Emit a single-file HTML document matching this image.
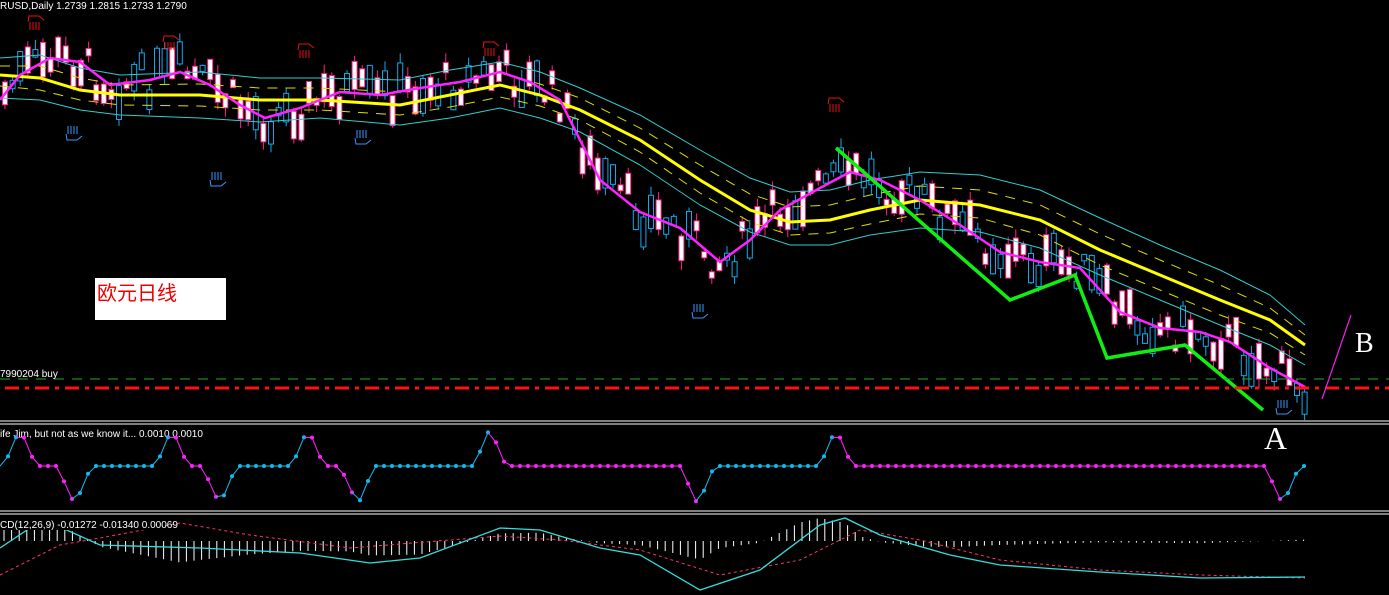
<!DOCTYPE html>
<html><head><meta charset="utf-8"><style>
html,body{margin:0;padding:0;background:#000;width:1389px;height:595px;overflow:hidden}
svg{display:block}
.t{font-family:"Liberation Sans",sans-serif;font-size:10px;fill:#fff}
</style></head><body>
<svg id="s" width="1389" height="595" xmlns="http://www.w3.org/2000/svg">
<g id="cand"></g>
<polyline fill="none" stroke="#3cc" stroke-width="1" points="0,58 40,55 80,68 120,75 200,72 260,78 320,78 400,80 450,70 500,62 540,72 580,88 640,115 700,150 750,178 790,192 830,190 870,180 920,172 980,175 1040,190 1100,218 1160,245 1220,270 1270,295 1305,325"/>
<polyline fill="none" stroke="#3cc" stroke-width="1" points="0,98 40,100 80,110 120,115 200,118 260,122 320,118 400,125 450,118 500,108 540,118 580,132 640,165 700,205 750,232 790,245 830,245 870,235 920,228 980,232 1040,248 1100,275 1160,300 1220,325 1270,345 1305,365"/>
<polyline fill="none" stroke="#dd0" stroke-width="1" stroke-dasharray="10,8" points="0,66 40,66 80,78 120,85 200,84 260,88 320,88 400,92 450,83 500,73 540,84 580,98 640,128 700,165 750,194 790,207 830,205 870,195 920,186 980,190 1040,205 1100,234 1160,260 1220,285 1270,308 1305,335"/>
<polyline fill="none" stroke="#dd0" stroke-width="1" stroke-dasharray="10,8" points="0,86 40,90 80,100 120,105 200,106 260,110 320,110 400,115 450,107 500,97 540,106 580,120 640,152 700,193 750,222 790,235 830,233 870,224 920,214 980,218 1040,235 1100,265 1160,290 1220,315 1270,333 1305,355"/>
<polyline fill="none" stroke="#ff0" stroke-width="3" points="0,75 40,78 80,90 120,95 200,95 260,100 320,100 400,105 450,95 500,85 540,95 580,110 640,140 700,180 750,210 790,222 830,220 870,210 920,200 980,205 1040,220 1100,250 1160,275 1220,300 1270,320 1305,345"/>
<polyline fill="none" stroke="#f2f" stroke-width="2.5" points="0,100 20,75 50,58 80,62 110,85 150,80 180,72 210,85 240,105 265,118 300,108 340,92 380,95 420,88 460,82 500,72 530,82 560,100 580,140 600,180 640,212 680,228 720,262 750,240 780,210 820,188 850,172 880,180 920,200 960,225 1000,252 1040,262 1080,268 1120,312 1160,328 1200,332 1230,342 1270,368 1305,387"/>
<polyline fill="none" stroke="#1e1" stroke-width="3.5" points="836,148 1010,300 1075,275 1107,358 1185,345 1263,410"/>
<g id="hands" fill="none" stroke-width="1"></g>
<line x1="0" y1="379" x2="1389" y2="379" stroke="#2a2" stroke-width="1" stroke-dasharray="10,8"/>
<line x1="5" y1="388" x2="1389" y2="388" stroke="#f11" stroke-width="3" stroke-dasharray="14,6,4,6"/>
<line x1="1322" y1="399" x2="1351" y2="315" stroke="#e2e" stroke-width="1.2"/>
<line x1="0" y1="421" x2="1389" y2="421" stroke="#fff"/>
<line x1="0" y1="424" x2="1389" y2="424" stroke="#fff"/>
<line x1="0" y1="511" x2="1389" y2="511" stroke="#fff"/>
<line x1="0" y1="514" x2="1389" y2="514" stroke="#fff"/>
<rect x="95" y="278" width="131" height="42" fill="#fff"/>
<text x="97" y="300" font-family="'Liberation Sans','Noto Sans CJK SC',sans-serif" font-size="20" fill="#e00">欧元日线</text>
<text x="1264" y="449" font-family="'Liberation Serif',serif" font-size="32" fill="#fff">A</text>
<text x="1355" y="352" font-family="'Liberation Serif',serif" font-size="28" fill="#fff">B</text>
<text class="t" x="0" y="9">RUSD,Daily  1.2739 1.2815 1.2733 1.2790</text>
<text class="t" x="0" y="377">7990204 buy</text>
<g id="macd"></g>
<rect x="0" y="428" width="200" height="12" fill="#000"/>
<text class="t" x="0" y="437">ife Jim, but not as we know it...  0.0010 0.0010</text>
<rect x="0" y="518" width="165" height="12" fill="#000"/>
<text class="t" x="0" y="528">CD(12,26,9) -0.01272 -0.01340 0.00069</text>
<g id="ind"></g>
</svg>
<script>
var NS="http://www.w3.org/2000/svg";
function el(p,t,a){var e=document.createElementNS(NS,t);for(var k in a)e.setAttribute(k,a[k]);p.appendChild(e);return e;}
var mag=[[0,100],[20,75],[50,58],[80,62],[110,85],[150,80],[180,72],[210,85],[240,105],[265,118],[300,108],[340,92],[380,95],[420,88],[460,82],[500,72],[530,82],[560,100],[580,140],[600,180],[640,212],[680,228],[720,262],[750,240],[780,210],[820,188],[850,172],[880,180],[920,200],[960,225],[1000,252],[1040,262],[1080,268],[1120,312],[1160,328],[1200,332],[1230,342],[1270,368],[1305,387]];
function interp(a,x){for(var i=1;i<a.length;i++){if(x<=a[i][0]){var p=a[i-1],q=a[i];return p[1]+(q[1]-p[1])*(x-p[0])/(q[0]-p[0]);}}return a[a.length-1][1];}
var seed=7;function r(){seed=(seed*9301+49297)%233280;return seed/233280;}
var g=document.getElementById('cand');
for(var x=5;x<1310;x+=7.6){var c=interp(mag,x)+(r()-0.5)*40;var h=6+r()*30;var up=r()>0.5;
var col=up?"#1ae":"#f28";el(g,'line',{x1:x,y1:c-h/2-r()*10,x2:x,y2:c+h/2+r()*10,stroke:col});
el(g,'rect',{x:x-2.5,y:c-h/2,width:5,height:h,fill:up?"#000":"#fff",stroke:col,"stroke-width":1});}
// hands
var hg=document.getElementById('hands');
function hand(x,y,c,down){var s=down?1:-1;var d="";for(var i=0;i<4;i++){d+="M"+(x+i*3)+","+y+" l0,"+(s*-8)+" ";}d+="M"+(x-2)+","+y+" l1,"+(s*6)+" l10,0 l5,"+(s*-4);el(hg,'path',{d:d,stroke:c});}
[[30,22],[165,42],[300,50],[485,48],[830,104]].forEach(function(p){hand(p[0],p[1],"#e11",false);});
[[68,134],[212,180],[357,138],[694,312],[1278,408]].forEach(function(p){hand(p[0],p[1],"#39f",true);});
// indicator
var ig=document.getElementById('ind');var pts=[];var base=466;
var peaks=[20,172,308,490,836],troughs=[75,220,358,698,1283];
for(var x=0;x<1310;x+=8){var y=base;
for(var i=0;i<peaks.length;i++){var d=x-peaks[i];if(d>=-16&&d<0)y=base-(16+d)*2.4;if(d>=0&&d<=16)y=428+d*2.4;}
for(var j=0;j<troughs.length;j++){var e=x-troughs[j];if(e>=-18&&e<0)y=base+(18+e)*2.2;if(e>=0&&e<=16)y=505-e*2.4;}
pts.push([x,y]);}
function isMag(x){var segs=[[20,75],[172,220],[308,358],[490,698],[836,1283]];for(var k=0;k<segs.length;k++)if(x>=segs[k][0]&&x<=segs[k][1])return true;return false;}
for(var i=1;i<pts.length;i++){var c=isMag(pts[i][0])?"#f2f":"#1be";el(ig,'line',{x1:pts[i-1][0],y1:pts[i-1][1],x2:pts[i][0],y2:pts[i][1],stroke:c});el(ig,'circle',{cx:pts[i][0],cy:pts[i][1],r:2,fill:c});}
// macd
var mg=document.getElementById('macd');
var mc=[[0,548],[30,528],[60,527],[100,545],[200,548],[300,553],[370,563],[420,558],[500,528],[540,530],[600,548],[640,555],[700,590],[760,570],[820,525],[845,518],[880,535],[950,555],[1000,565],[1100,572],[1200,578],[1305,577]];
var sg=[[0,575],[60,545],[100,538],[180,523],[250,535],[350,548],[500,536],[560,540],[640,550],[720,575],[800,560],[860,530],[920,540],[1000,560],[1100,570],[1200,575],[1305,578]];
function f(a){return a.map(function(p){return p.join(',')}).join(' ');}
for(var x=4;x<1310;x+=7.6){var hh=(interp(sg,x)-interp(mc,x))*0.9;var y0=541;
el(mg,'line',{x1:x,y1:y0,x2:x,y2:y0-Math.max(-22,Math.min(22,hh))-0.5,stroke:"#fff"});}
el(mg,'polyline',{points:f(sg),fill:"none",stroke:"#f36","stroke-dasharray":"3,3"});
el(mg,'polyline',{points:f(mc),fill:"none",stroke:"#3dd","stroke-width":1.3});
</script>
</body></html>
